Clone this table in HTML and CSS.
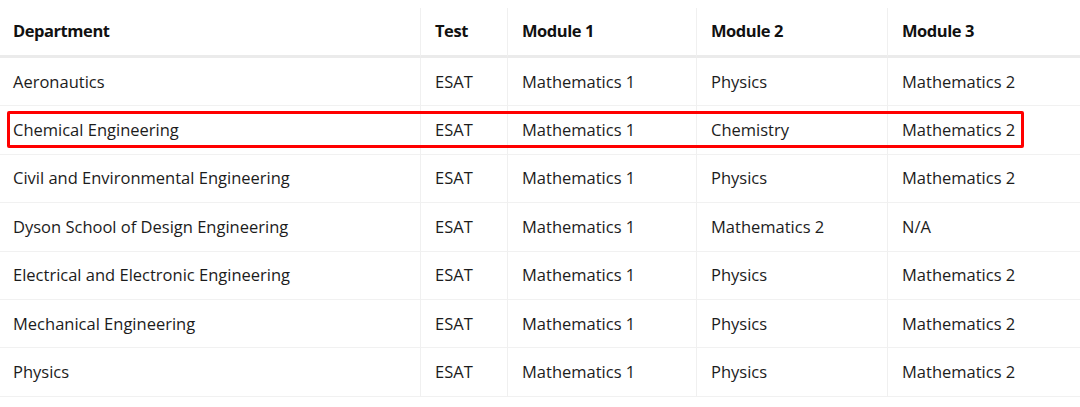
FILE: index.html
```html
<!DOCTYPE html>
<html lang="en">
<head>
<meta charset="utf-8">
<title>Department modules</title>
<link rel="stylesheet" href="styles.css">
</head>
<body>
<div class="wrap">
  <table class="modules">
    <colgroup>
      <col class="c-dept">
      <col class="c-test">
      <col class="c-mod">
      <col class="c-mod2">
      <col class="c-mod3">
    </colgroup>
    <thead>
      <tr>
        <th>Department</th>
        <th>Test</th>
        <th>Module 1</th>
        <th>Module 2</th>
        <th>Module 3</th>
      </tr>
    </thead>
    <tbody>
      <tr><td>Aeronautics</td><td>ESAT</td><td>Mathematics 1</td><td>Physics</td><td>Mathematics 2</td></tr>
      <tr><td>Chemical Engineering</td><td>ESAT</td><td>Mathematics 1</td><td>Chemistry</td><td>Mathematics 2</td></tr>
      <tr><td>Civil and Environmental Engineering</td><td>ESAT</td><td>Mathematics 1</td><td>Physics</td><td>Mathematics 2</td></tr>
      <tr><td>Dyson School of Design Engineering</td><td>ESAT</td><td>Mathematics 1</td><td>Mathematics 2</td><td>N/A</td></tr>
      <tr><td>Electrical and Electronic Engineering</td><td>ESAT</td><td>Mathematics 1</td><td>Physics</td><td>Mathematics 2</td></tr>
      <tr><td>Mechanical Engineering</td><td>ESAT</td><td>Mathematics 1</td><td>Physics</td><td>Mathematics 2</td></tr>
      <tr><td>Physics</td><td>ESAT</td><td>Mathematics 1</td><td>Physics</td><td>Mathematics 2</td></tr>
    </tbody>
  </table>
  <div class="highlight"></div>
</div>
</body>
</html>
```
FILE: styles.css
```css
html, body {
  margin: 0;
  padding: 0;
  background: #ffffff;
}

body {
  font-family: "Open Sans", "Noto Sans", sans-serif;
  font-size: 16.5px;
  color: #1c1c1c;
}

.wrap {
  position: relative;
  padding-top: 8px;
  width: 1080px;
}

.modules {
  width: 1080px;
  table-layout: fixed;
  border-collapse: separate;
  border-spacing: 0;
}

.c-dept { width: 420px; }
.c-test { width: 87px; }
.c-mod { width: 189px; }
.c-mod2 { width: 191px; }
.c-mod3 { width: 193px; }

.modules th,
.modules td {
  text-align: left;
  vertical-align: middle;
  padding: 0 14px;
  white-space: nowrap;
  box-sizing: border-box;
}

.modules th + th,
.modules td + td {
  border-left: 1px solid #f0f0f0;
}

.modules th:first-child,
.modules td:first-child {
  padding-left: 13px;
}

.modules th {
  height: 50px;
  font-weight: 700;
  color: #111111;
  letter-spacing: -0.45px;
  border-bottom: 3px solid #ebebeb;
  padding-bottom: 2px;
}

.modules td {
  height: 48.4px;
  border-bottom: 1px solid #f1f1f1;
  padding-bottom: 1px;
}

.highlight {
  position: absolute;
  left: 7px;
  top: 111px;
  width: 1017px;
  height: 37px;
  box-sizing: border-box;
  border: 3px solid #ff0000;
  border-radius: 2px;
}
```
